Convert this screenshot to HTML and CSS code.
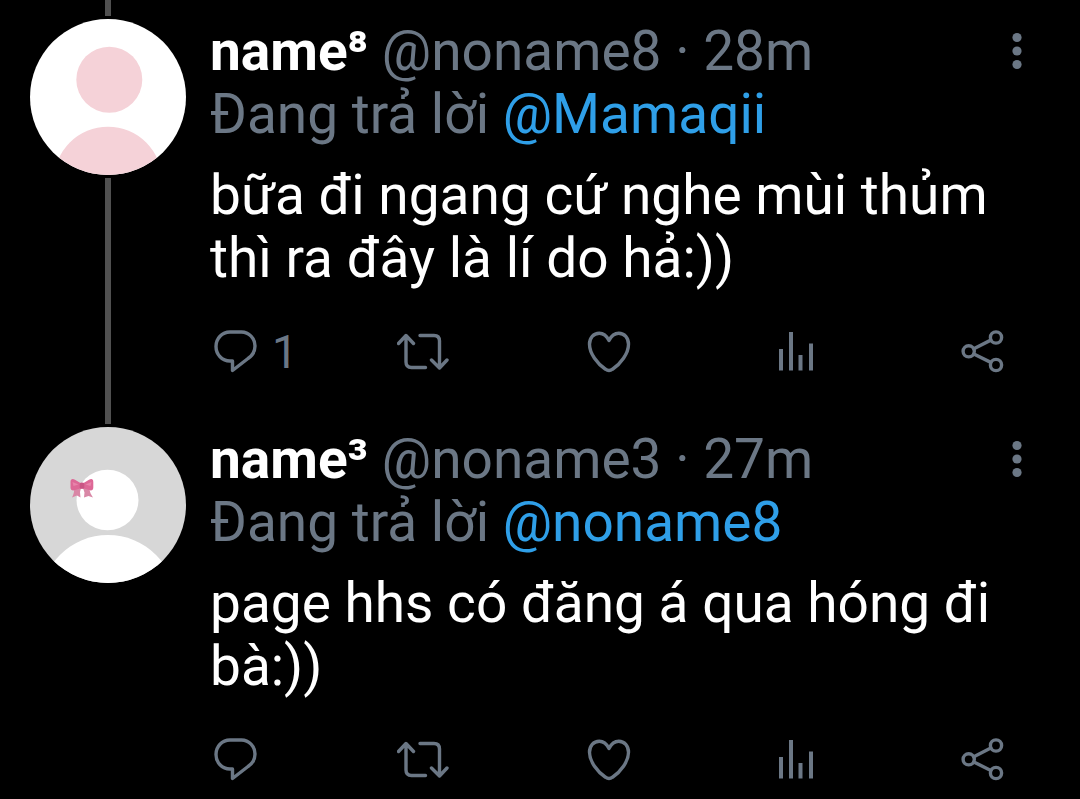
FILE: index.html
```html
<!DOCTYPE html>
<html lang="vi">
<head>
    <meta charset="UTF-8">
    <meta name="viewport" content="width=device-width, initial-scale=1.0">
    <title>Thread</title>
    <link rel="stylesheet" href="styles.css">
</head>
<body>
    <!-- shared icons -->
    <svg class="sprite" aria-hidden="true">
        <symbol id="icon-more" viewBox="0 0 40 63">
            <circle cx="20" cy="17.5" r="4.6"/>
            <circle cx="20" cy="31" r="4.6"/>
            <circle cx="20" cy="44.5" r="4.6"/>
        </symbol>
        <symbol id="icon-reply" viewBox="0 0 52 52">
            <path class="stroke" d="M20 6h11.5C39 6 45 12.5 45 20c0 5.5-2.5 9.5-7 12.5L22.5 44.5V35H20C12 35 6 28.5 6 20.5S12 6 20 6z"/>
        </symbol>
        <symbol id="icon-retweet" viewBox="0 0 52 52">
            <path class="stroke" d="M1.5 17.5L9 9.5l7.5 8M9 10v26c0 3.5 2 5.5 5.5 5.5h14M23 9.5h14c3.5 0 5.5 2 5.5 5.5v27M34.5 34l8 8 7.5-8"/>
        </symbol>
        <symbol id="icon-like" viewBox="0 0 52 52">
            <path class="stroke" d="M25 14.5C22.5 9.7 19 7.3 15.3 7.3 9.5 7.3 5.5 12 5.5 18.2 5.5 27.5 13.5 38 21.5 43.2 24 45 26 45 28.5 43.2 36.5 38 44.5 27.5 44.5 18.2 44.5 12 40.5 7.3 34.7 7.3 31 7.3 27.5 9.7 25 14.5z"/>
        </symbol>
        <symbol id="icon-stats" viewBox="0 0 52 52">
            <path d="M8 23h4v21.500H8zM18 6h4v38.500h-4zM27.500 29h4v15.500h-4zM38 17.500h4v27h-4z"/>
        </symbol>
        <symbol id="icon-share" viewBox="0 0 52 52">
            <g class="stroke">
                <circle cx="10.7" cy="25.3" r="5.6"/>
                <circle cx="38" cy="11.5" r="5.6"/>
                <circle cx="38" cy="39" r="5.6"/>
                <path d="M15.8 22.7l17-8.6M15.8 27.9l17 8.5"/>
            </g>
        </symbol>
    </svg>

    <main class="thread">
        <article class="tweet">
            <div class="rail">
                <span class="line line-top"></span>
                <svg class="avatar" viewBox="0 0 156 156" role="img" aria-label="name⁸">
                    <rect width="156" height="156" fill="#fff"/>
                    <circle cx="79.3" cy="60.7" r="33" fill="#f5d2d8"/>
                    <circle cx="78" cy="161.7" r="54" fill="#f5d2d8"/>
                </svg>
                <span class="line line-bottom"></span>
            </div>
            <div class="content">
                <header class="head">
                    <div class="author"><strong class="name">name⁸</strong> <span>@noname8 · 28m</span></div>
                    <button class="more" type="button" aria-label="More"><svg><use href="#icon-more"/></svg></button>
                </header>
                <div class="replying">Đang trả lời <a href="#">@Mamaqii</a></div>
                <p class="text">bữa đi ngang cứ nghe mùi thủm thì ra đây là lí do hả:))</p>
                <div class="actions">
                    <button type="button" aria-label="Reply"><svg><use href="#icon-reply"/></svg><span class="count">1</span></button>
                    <button type="button" aria-label="Retweet"><svg><use href="#icon-retweet"/></svg></button>
                    <button type="button" aria-label="Like"><svg><use href="#icon-like"/></svg></button>
                    <button type="button" aria-label="Stats"><svg><use href="#icon-stats"/></svg></button>
                    <button type="button" aria-label="Share"><svg><use href="#icon-share"/></svg></button>
                </div>
            </div>
        </article>

        <article class="tweet">
            <div class="rail">
                <span class="line line-top"></span>
                <svg class="avatar" viewBox="0 0 156 156" role="img" aria-label="name³">
                    <rect width="156" height="156" fill="#d7d7d7"/>
                    <ellipse cx="77.5" cy="73" rx="31" ry="30.3" fill="#fff"/>
                    <circle cx="78" cy="176" r="68" fill="#fff"/>
                    <!-- hair bow -->
                    <path fill="#d987a6" d="M44 61h7l-1 4 .5 5.500-3.500-2-5 2c1.500-3 2.500-6 2-9.500zM53 61h6.500c0 4 1.500 6.500 3.500 9.500l-4.500-1.500-4.500 1.500.500-5z"/>
                    <path fill="#dd6896" d="M40.500 55c0-3 2-3.500 4.500-2.300l5 3h4l5-3c2.500-1.200 4.300-.7 4.300 2.300v5.500c0 2.500-1.800 3.500-4.300 2.500l-5-1.500h-4l-5 1.500c-2.500 1-4.500 0-4.500-2.500z"/>
                    <path fill="#e884ab" d="M42.500 55l6 2.500-5 1.500zM61.500 55l-6 2.500 5 1.500z"/>
                    <rect x="49.7" y="55.7" width="4.6" height="6" rx="1.5" fill="#c95584"/>
                </svg>
            </div>
            <div class="content">
                <header class="head">
                    <div class="author"><strong class="name">name³</strong> <span>@noname3 · 27m</span></div>
                    <button class="more" type="button" aria-label="More"><svg><use href="#icon-more"/></svg></button>
                </header>
                <div class="replying">Đang trả lời <a href="#">@noname8</a></div>
                <p class="text">page hhs có đăng á qua hóng đi bà:))</p>
                <div class="actions">
                    <button type="button" aria-label="Reply"><svg><use href="#icon-reply"/></svg></button>
                    <button type="button" aria-label="Retweet"><svg><use href="#icon-retweet"/></svg></button>
                    <button type="button" aria-label="Like"><svg><use href="#icon-like"/></svg></button>
                    <button type="button" aria-label="Stats"><svg><use href="#icon-stats"/></svg></button>
                    <button type="button" aria-label="Share"><svg><use href="#icon-share"/></svg></button>
                </div>
            </div>
        </article>
    </main>
</body>
</html>
```
FILE: styles.css
```css
* {
    box-sizing: border-box;
}

body {
    margin: 0;
    background: #000;
    color: #6b7785;
    font-family: Roboto, sans-serif;
    font-size: 55px;
    line-height: 63px;
}

a {
    color: #2f9fe8;
    text-decoration: none;
}

button {
    display: flex;
    align-items: center;
    padding: 0;
    border: 0;
    background: none;
    color: inherit;
    font: inherit;
    cursor: pointer;
}

svg {
    display: block;
    fill: currentColor;
}

.sprite {
    display: none;
}

.stroke {
    fill: none;
    stroke: currentColor;
    stroke-width: 3.4;
    stroke-linecap: round;
    stroke-linejoin: round;
}

.tweet {
    display: flex;
    gap: 24px;
    padding: 0 43px 0 30px;
}

/* avatar column with the thread line */
.rail {
    display: flex;
    flex-direction: column;
    align-items: center;
    gap: 3px;
}

.line {
    width: 6px;
    background: #505050;
}

.line-top {
    height: 16px;
}

.line-bottom {
    flex: 1;
}

.avatar {
    width: 156px;
    height: 156px;
    border-radius: 50%;
}

.content {
    flex: 1;
    min-width: 0;
    padding: 20px 0 30px;
}

.tweet:last-child .content {
    padding-bottom: 12px;
}

.head {
    display: flex;
    justify-content: space-between;
}

.name {
    color: #fff;
    font-weight: 700;
}

.more svg {
    width: 40px;
    height: 63px;
}

.text {
    margin: 18px 0 36px;
    color: #fff;
}

.actions {
    display: grid;
    grid-template-columns: repeat(4, 1fr) 52px;
    margin-right: 27px;
}

.actions button {
    gap: 10px;
    height: 52px;
}

.actions svg {
    width: 52px;
    height: 52px;
}

.count {
    font-size: 46px;
}
```
